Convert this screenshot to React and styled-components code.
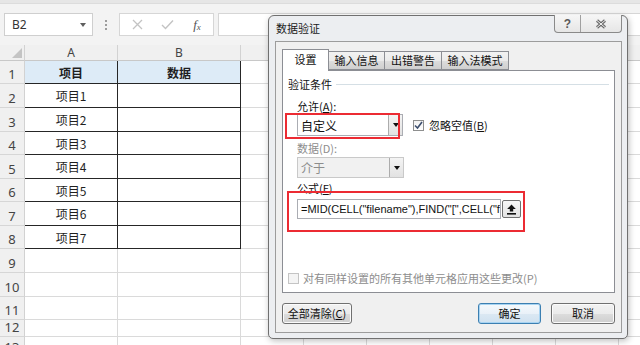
import React from "react";
import styled, { createGlobalStyle } from "styled-components";

const GlobalStyle = createGlobalStyle`
  html, body { margin: 0; padding: 0; background: #fff; }
  body { font-family: "Noto Sans CJK SC", "Noto Sans", sans-serif; }
`;

const rowHeights = [23, 24, 24, 23, 24, 23, 24, 23, 24, 24, 23, 17, 20];
const tableRows = ["项目1", "项目2", "项目3", "项目4", "项目5", "项目6", "项目7"];
const extraCols = 7;

export default function App() {
  return (
    <>
      <GlobalStyle />
      <Screen>
        <TopStrip />
        <Toolbar>
          <NameBox>
            <span>B2</span>
            <DropCaret />
          </NameBox>
          <Grip>
            <i />
            <i />
            <i />
          </Grip>
          <FormulaTools>
            <ToolSlot>
              <svg width="11" height="11" viewBox="0 0 11 11">
                <path d="M1 1 L10 10 M10 1 L1 10" stroke="#c3c3c3" strokeWidth="1.3" />
              </svg>
            </ToolSlot>
            <ToolSlot>
              <svg width="13" height="11" viewBox="0 0 13 11">
                <path d="M1 6 L4.5 9.5 L12 1.5" stroke="#c3c3c3" strokeWidth="1.4" fill="none" />
              </svg>
            </ToolSlot>
            <ToolSlot>
              <Fx>
                f<sub>x</sub>
              </Fx>
            </ToolSlot>
          </FormulaTools>
          <FormulaBar />
        </Toolbar>

        <Sheet>
          <Corner>
            <CornerMark />
          </Corner>
          <ColHead>A</ColHead>
          <ColHead>B</ColHead>
          {Array.from({ length: extraCols }).map((_, i) => (
            <ColHead key={i} />
          ))}

          {rowHeights.map((_, r) => {
            const inTable = r < 8;
            return (
              <React.Fragment key={r}>
                <RowHead>{r + 1}</RowHead>
                <Cell $dark={inTable} $fill={r === 0 ? "#ddebf7" : undefined} $bold={r === 0}>
                  {r === 0 ? "项目" : tableRows[r - 1] || ""}
                </Cell>
                <Cell $dark={inTable} $fill={r === 0 ? "#ddebf7" : undefined} $bold={r === 0}>
                  {r === 0 ? "数据" : ""}
                </Cell>
                {Array.from({ length: extraCols }).map((_, i) => (
                  <Cell key={i} />
                ))}
              </React.Fragment>
            );
          })}
        </Sheet>

        <Dialog>
          <TitleBar>
            <Title>数据验证</Title>
            <CaptionButtons>
              <CaptionButton $w={25}>?</CaptionButton>
              <CaptionButton $w={40}>
                <svg width="12" height="10" viewBox="0 0 12 10">
                  <path d="M2 1.5 L10 8.5 M10 1.5 L2 8.5" stroke="#6a6a6a" strokeWidth="3" />
                  <path d="M2 1.5 L10 8.5 M10 1.5 L2 8.5" stroke="#f4f4f4" strokeWidth="1" />
                </svg>
              </CaptionButton>
            </CaptionButtons>
          </TitleBar>

          <Client>
            <Tabs>
              <Tab $active $w={47}>设置</Tab>
              <Tab $w={56}>输入信息</Tab>
              <Tab $w={57}>出错警告</Tab>
              <Tab $w={67}>输入法模式</Tab>
            </Tabs>

            <Panel>
              <GroupHeader>
                <span>验证条件</span>
                <GroupLine />
              </GroupHeader>

              <Field>
                <Label>
                  允许(<u>A</u>):
                </Label>
                <Row $mt={2}>
                  <Combo $w={106} $h={22}>
                    <ComboText>自定义</ComboText>
                    <ComboButton>
                      <Caret />
                    </ComboButton>
                  </Combo>
                  <CheckBox $checked>
                    <svg width="9" height="9" viewBox="0 0 9 9">
                      <path d="M1 4.5 L3.5 7 L8 1" stroke="#3d4f6e" strokeWidth="1.6" fill="none" />
                    </svg>
                  </CheckBox>
                  <CheckLabel>
                    忽略空值(<u>B</u>)
                  </CheckLabel>
                </Row>

                <Label $mt={6} $muted>
                  数据(D):
                </Label>
                <Row $mt={3}>
                  <Combo $w={107} $h={21} $disabled>
                    <ComboText $muted>介于</ComboText>
                    <ComboButton>
                      <Caret />
                    </ComboButton>
                  </Combo>
                </Row>

                <Label $mt={4}>
                  公式(<u>F</u>)
                </Label>
                <Row $mt={5}>
                  <FormulaInput>=MID(CELL("filename"),FIND("[",CELL("fi</FormulaInput>
                  <RefButton>
                    <svg width="9" height="11" viewBox="0 0 9 11">
                      <path d="M4.5 0.5 L8.8 5 L6.2 5 L6.2 7.5 L2.8 7.5 L2.8 5 L0.2 5 Z" fill="#111" />
                      <rect x="0" y="9" width="9" height="1.6" fill="#111" />
                    </svg>
                  </RefButton>
                </Row>
              </Field>

              <ApplyRow>
                <CheckBox $disabled />
                <ApplyText>对有同样设置的所有其他单元格应用这些更改(P)</ApplyText>
              </ApplyRow>

              <Highlight $l={2} $t={42} $w={115} $h={26} />
              <Highlight $l={4} $t={120} $w={238} $h={41} />
            </Panel>

            <ButtonRow>
              <Button $w={70}>
                全部清除(<u>C</u>)
              </Button>
              <ButtonGroup>
                <Button $w={63} $default>
                  确定
                </Button>
                <Button $w={64}>取消</Button>
              </ButtonGroup>
            </ButtonRow>
          </Client>
        </Dialog>
      </Screen>
    </>
  );
}

const Screen = styled.div`
  position: relative;
  width: 640px;
  height: 345px;
  overflow: hidden;
  background: #fff;
`;

const TopStrip = styled.div`
  height: 3px;
  background: #e6e6e6;
  border-bottom: 1px solid #dcdcdc;
`;

const Toolbar = styled.div`
  height: 41px;
  box-sizing: border-box;
  background: #f3f3f3;
  display: flex;
  align-items: center;
  padding-left: 4px;
`;

const NameBox = styled.div`
  width: 89px;
  height: 23px;
  box-sizing: border-box;
  border: 1px solid #cfcfcf;
  background: #fff;
  display: flex;
  align-items: center;
  justify-content: space-between;
  padding: 0 6px 0 7px;
  font-family: "Noto Sans", sans-serif;
  font-size: 12px;
  color: #333;
`;

const DropCaret = styled.span`
  width: 0;
  height: 0;
  border-left: 3.5px solid transparent;
  border-right: 3.5px solid transparent;
  border-top: 4px solid #5f5f5f;
`;

const Grip = styled.div`
  width: 26px;
  display: flex;
  flex-direction: column;
  align-items: center;
  gap: 2px;

  i {
    width: 2px;
    height: 2px;
    background: #9d9d9d;
  }
`;

const FormulaTools = styled.div`
  width: 95px;
  height: 23px;
  box-sizing: border-box;
  border: 1px solid #d6d6d6;
  background: #fff;
  display: flex;
  align-items: center;
  padding-left: 2px;
`;

const ToolSlot = styled.div`
  width: 30px;
  display: flex;
  justify-content: center;
  align-items: center;
`;

const Fx = styled.span`
  font-family: "Liberation Serif", serif;
  font-style: italic;
  font-size: 13px;
  color: #555;
  line-height: 1;

  sub {
    font-size: 9px;
    vertical-align: -1px;
  }
`;

const FormulaBar = styled.div`
  flex: 1;
  height: 23px;
  margin-left: 4px;
  box-sizing: border-box;
  border: 1px solid #d6d6d6;
  border-right: none;
  background: #fff;
`;

const Sheet = styled.div`
  display: grid;
  grid-template-columns: 25px 93px 123px repeat(${extraCols}, 63px);
  grid-template-rows: 16px ${rowHeights.map((h) => `${h}px`).join(" ")};
`;

const HeadBase = styled.div`
  box-sizing: border-box;
  background: #f0f0f0;
  border-right: 1px solid #d2d2d2;
  border-bottom: 1px solid #c8c8c8;
  font-family: "Noto Sans", sans-serif;
  color: #444;
  font-size: 12px;
  line-height: 1;
  display: flex;
  justify-content: center;
`;

const Corner = styled(HeadBase)`
  align-items: flex-end;
  justify-content: flex-end;
  padding: 0 2px 2px 0;
`;

const CornerMark = styled.span`
  width: 0;
  height: 0;
  border-left: 10px solid transparent;
  border-bottom: 10px solid #c4c4c4;
`;

const ColHead = styled(HeadBase)`
  align-items: center;
  padding-top: 1px;
`;

const RowHead = styled(HeadBase)`
  align-items: flex-end;
  padding-bottom: 2px;
  font-size: 13px;
  border-bottom-color: #d6d6d6;
`;

const Cell = styled.div`
  box-sizing: border-box;
  display: flex;
  align-items: center;
  justify-content: center;
  background: ${(p) => p.$fill || "#fff"};
  border-right: 1px solid ${(p) => (p.$dark ? "#262626" : "#dadada")};
  border-bottom: 1px solid ${(p) => (p.$dark ? "#262626" : "#dadada")};
  font-size: 12px;
  font-weight: ${(p) => (p.$bold ? 700 : 400)};
  color: #1f1f1f;
  line-height: 1;
  padding-top: 1px;
`;

/* dialog window, floats over the sheet */
const Dialog = styled.div`
  position: absolute;
  left: 268px;
  top: 15px;
  width: 360px;
  height: 324px;
  box-sizing: border-box;
  background: #eceef1;
  border: 1px solid #707070;
  border-radius: 6px 6px 5px 5px;
  box-shadow: 1px 2px 6px rgba(0, 0, 0, 0.25);
  display: flex;
  flex-direction: column;
  padding: 0 5px 5px 6px;
  font-family: "Noto Sans CJK SC", "Noto Sans", sans-serif;
  font-size: 11px;
  color: #111;
`;

const TitleBar = styled.div`
  height: 25px;
  display: flex;
  align-items: flex-start;
  flex-shrink: 0;
`;

const Title = styled.div`
  margin-top: 6px;
  padding-left: 1px;
  font-size: 11px;
  line-height: 13px;
  color: #1a1a1a;
`;

const CaptionButtons = styled.div`
  margin-left: auto;
  margin-top: -1px;
  display: flex;
  height: 18px;
  box-sizing: border-box;
  border: 1px solid #8a8a8a;
  border-top: none;
  border-radius: 0 0 4px 4px;
  background: linear-gradient(#f6f6f6, #e6e6e6);
  overflow: hidden;
`;

const CaptionButton = styled.div`
  width: ${(p) => p.$w}px;
  display: flex;
  align-items: center;
  justify-content: center;
  font-family: "Liberation Sans", sans-serif;
  font-weight: 700;
  font-size: 12px;
  color: #5a5a5a;

  & + & {
    border-left: 1px solid #a0a0a0;
  }
`;

const Client = styled.div`
  flex: 1;
  box-sizing: border-box;
  border: 1px solid #9c9c9c;
  background: #f0f0f0;
  padding: 7px 6px 0 6px;
  display: flex;
  flex-direction: column;
`;

const Tabs = styled.div`
  display: flex;
  align-items: flex-end;
  height: 21px;
  position: relative;
  z-index: 1;
`;

const Tab = styled.div`
  width: ${(p) => p.$w}px;
  height: ${(p) => (p.$active ? 22 : 19)}px;
  margin-bottom: ${(p) => (p.$active ? -1 : 0)}px;
  box-sizing: border-box;
  border: 1px solid #8c8e94;
  border-bottom: ${(p) => (p.$active ? "none" : "1px solid #8c8e94")};
  border-left: ${(p) => (p.$active ? "1px solid #8c8e94" : "none")};
  background: ${(p) => (p.$active ? "#fff" : "linear-gradient(#f2f2f2, #ebebeb 50%, #dddddd 51%, #cfcfcf)")};
  display: flex;
  align-items: center;
  justify-content: center;
  font-size: 11px;
  line-height: 1;
  padding-bottom: ${(p) => (p.$active ? 2 : 0)}px;
`;

const Panel = styled.div`
  position: relative;
  height: 223px;
  box-sizing: border-box;
  border: 1px solid #8c8e94;
  background: #fff;
  display: flex;
  flex-direction: column;
`;

const GroupHeader = styled.div`
  margin-top: 6px;
  height: 14px;
  padding: 0 5px;
  display: flex;
  align-items: center;
  line-height: 14px;
`;

const GroupLine = styled.div`
  flex: 1;
  height: 1px;
  margin-left: 4px;
  background: #d5dfe5;
`;

const Field = styled.div`
  padding-left: 14px;
  display: flex;
  flex-direction: column;
  align-items: flex-start;
`;

const Label = styled.div`
  margin-top: ${(p) => (p.$mt ?? 9)}px;
  height: 12px;
  line-height: 12px;
  color: ${(p) => (p.$muted ? "#8d8d8d" : "#111")};
`;

const Row = styled.div`
  margin-top: ${(p) => p.$mt}px;
  display: flex;
  align-items: center;
`;

const Combo = styled.div`
  width: ${(p) => p.$w}px;
  height: ${(p) => p.$h}px;
  box-sizing: border-box;
  border: 1px solid ${(p) => (p.$disabled ? "#c9c9c9" : "#abadb3")};
  background: ${(p) => (p.$disabled ? "#f1f1f1" : "#fff")};
  display: flex;
  align-items: stretch;
`;

const ComboText = styled.div`
  flex: 1;
  display: flex;
  align-items: center;
  padding-left: 3px;
  font-size: 12px;
  color: ${(p) => (p.$muted ? "#8d8d8d" : "#111")};
`;

const ComboButton = styled.div`
  width: 13px;
  border-left: 1px solid #acacac;
  background: linear-gradient(#f4f4f4, #e2e2e2);
  display: flex;
  align-items: center;
  justify-content: center;
`;

const Caret = styled.span`
  width: 0;
  height: 0;
  border-left: 3.5px solid transparent;
  border-right: 3.5px solid transparent;
  border-top: 4px solid #111;
`;

const CheckBox = styled.div`
  width: 11px;
  height: 11px;
  box-sizing: border-box;
  margin-left: ${(p) => (p.$disabled ? 0 : 10)}px;
  border: 1px solid ${(p) => (p.$disabled ? "#c4c4c4" : "#8e8f8f")};
  background: ${(p) => (p.$disabled ? "#f4f4f4" : "linear-gradient(#f2f2f2, #ffffff)")};
  display: flex;
  align-items: center;
  justify-content: center;
`;

const CheckLabel = styled.span`
  margin-left: 5px;
  font-size: 11px;
`;

const FormulaInput = styled.div`
  width: 204px;
  height: 20px;
  box-sizing: border-box;
  border: 1px solid #abadb3;
  padding-left: 3px;
  overflow: hidden;
  white-space: nowrap;
  font-family: "Liberation Sans", sans-serif;
  font-size: 11px;
  line-height: 18px;
  color: #111;
`;

const RefButton = styled.div`
  width: 19px;
  height: 18px;
  margin-left: 1px;
  box-sizing: border-box;
  border: 1px solid #707070;
  border-radius: 2px;
  background: linear-gradient(#f6f6f6, #e3e3e3);
  display: flex;
  align-items: center;
  justify-content: center;
`;

const ApplyRow = styled.div`
  margin-top: auto;
  margin-bottom: 8px;
  padding-left: 5px;
  display: flex;
  align-items: center;
`;

const ApplyText = styled.span`
  margin-left: 4px;
  color: #8d8d8d;
  font-size: 11px;
  line-height: 12px;
`;

const Highlight = styled.div`
  position: absolute;
  left: ${(p) => p.$l}px;
  top: ${(p) => p.$t}px;
  width: ${(p) => p.$w}px;
  height: ${(p) => p.$h}px;
  box-sizing: border-box;
  border: 2px solid #ec2b33;
  pointer-events: none;
`;

const ButtonRow = styled.div`
  margin-top: 10px;
  display: flex;
  justify-content: space-between;
`;

const ButtonGroup = styled.div`
  display: flex;
  gap: 10px;
`;

const Button = styled.div`
  width: ${(p) => p.$w}px;
  height: 21px;
  box-sizing: border-box;
  border: 1px solid ${(p) => (p.$default ? "#3c7fb1" : "#707070")};
  border-radius: 3px;
  background: ${(p) =>
    p.$default
      ? "linear-gradient(#f5f9fc, #e9f1f8 50%, #dbe8f3 51%, #d0e2f0)"
      : "linear-gradient(#f2f2f2, #ebebeb 50%, #dddddd 51%, #cfcfcf)"};
  box-shadow: ${(p) => (p.$default ? "inset 0 0 0 1px #a8d4f2" : "inset 0 0 0 1px #fbfbfb")};
  display: flex;
  align-items: center;
  justify-content: center;
  font-size: 11px;
  line-height: 1;
  color: #111;
`;
